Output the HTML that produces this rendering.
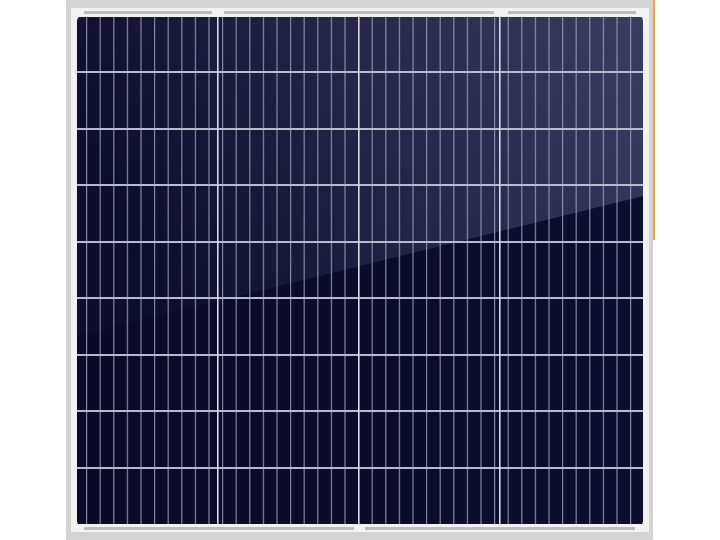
<!DOCTYPE html>
<html><head><style>
html,body{margin:0;padding:0;background:#fff;width:720px;height:540px;overflow:hidden}
</style></head><body>
<svg width="720" height="540" viewBox="0 0 720 540" xmlns="http://www.w3.org/2000/svg">
<defs>
<linearGradient id="base" x1="0" y1="0" x2="1" y2="0">
<stop offset="0" stop-color="#080a26"/><stop offset="1" stop-color="#0c0e2e"/>
</linearGradient>
<linearGradient id="glare" x1="0" y1="0.3" x2="1" y2="0">
<stop offset="0" stop-color="#5a5e88" stop-opacity="0.05"/>
<stop offset="0.5" stop-color="#6a6e98" stop-opacity="0.28"/>
<stop offset="1" stop-color="#7a7ea8" stop-opacity="0.42"/>
</linearGradient>
<pattern id="vl" x="86" y="0" width="13.6" height="540" patternUnits="userSpaceOnUse">
<rect x="0" y="0" width="1.2" height="540" fill="#9ea2bc"/>
</pattern>
</defs>
<rect x="0" y="0" width="720" height="540" fill="#fff"/>
<rect x="66" y="0" width="587" height="540" fill="#d3d3d3"/>
<rect x="71" y="8" width="578" height="524" fill="#f2f2f2"/>
<rect x="77" y="16" width="566" height="510" rx="5" fill="url(#base)"/>
<polygon points="77,16 643,16 643,196 77,336" fill="url(#glare)"/>
<rect x="77" y="16" width="566" height="510" fill="url(#vl)" opacity="0.8"/>
<g fill="#b8bbcc">
<rect x="77" y="71" width="566" height="2"/>
<rect x="77" y="128" width="566" height="2"/>
<rect x="77" y="184" width="566" height="2"/>
<rect x="77" y="241" width="566" height="2"/>
<rect x="77" y="297" width="566" height="2"/>
<rect x="77" y="354" width="566" height="2"/>
<rect x="77" y="410" width="566" height="2"/>
<rect x="77" y="467" width="566" height="2"/>
</g>
<g fill="#d8d8e4">
<rect x="217" y="16" width="1.6" height="510"/>
<rect x="358" y="16" width="1.6" height="510"/>
<rect x="499" y="16" width="1.6" height="510"/>
</g>
<rect x="77" y="14" width="566" height="3" fill="#f2f2f2"/>
<rect x="77" y="524" width="566" height="3" fill="#f2f2f2"/>
<g fill="#bdbdbd">
<rect x="84" y="11" width="128" height="3"/><rect x="224" y="11" width="270" height="3"/><rect x="508" y="11" width="128" height="3"/>
<rect x="84" y="527" width="270" height="3"/><rect x="365" y="527" width="270" height="3"/>
</g>
<rect x="653" y="0" width="2" height="240" fill="#f0a040"/>
</svg>
</body></html>
